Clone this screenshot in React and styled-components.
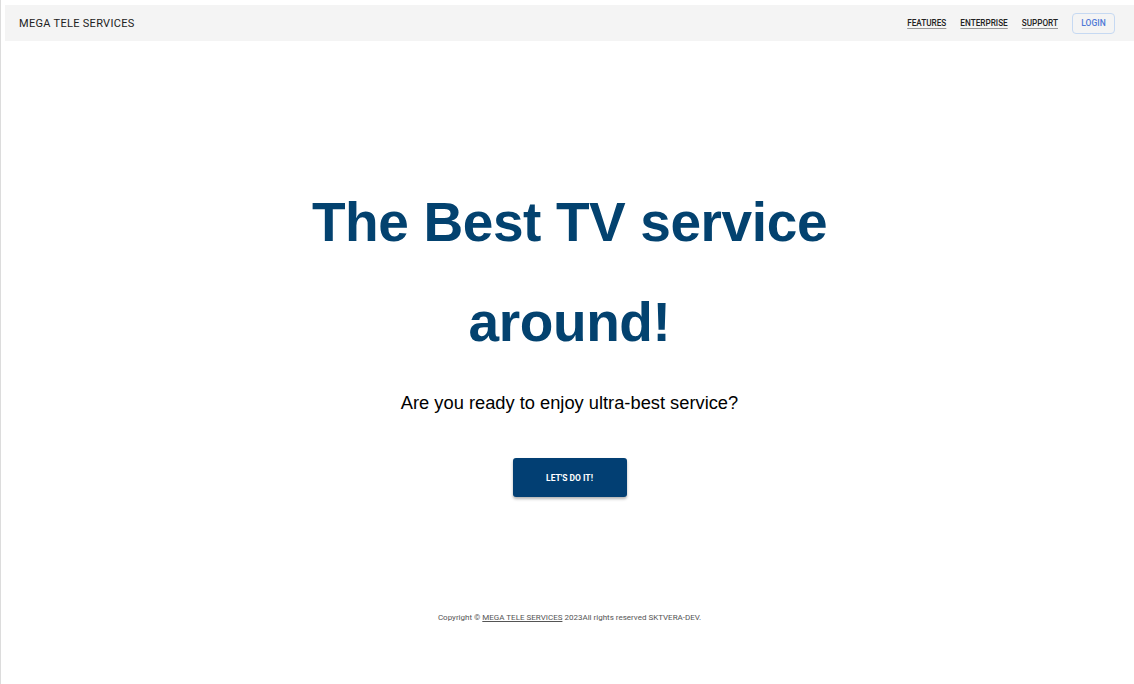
import styled, { createGlobalStyle } from 'styled-components';

const GlobalStyle = createGlobalStyle`
  html, body {
    margin: 0;
    padding: 0;
    background: #ffffff;
  }
  body {
    font-family: Roboto, "Liberation Sans", sans-serif;
  }
`;

const Page = styled.div`
  min-height: 684px;
  box-sizing: border-box;
  border-left: 1px solid #dcdcdc;
  padding: 5px 0 0 4px;
  display: flex;
  flex-direction: column;
`;

const Header = styled.header`
  height: 36px;
  background: #f4f4f4;
  display: flex;
  align-items: center;
  justify-content: space-between;
  padding: 0 19px 0 14px;
`;

const Brand = styled.div`
  font-family: Roboto, sans-serif;
  font-size: 11px;
  font-weight: 400;
  color: #222;
  letter-spacing: 0.3px;
`;

const Nav = styled.nav`
  display: flex;
  align-items: center;
  gap: 14px;
`;

const NavLink = styled.a`
  font-family: Roboto, sans-serif;
  font-size: 8.2px;
  font-weight: 500;
  color: #222;
  text-decoration: underline;
  text-decoration-color: #999;
  text-underline-offset: 2px;
`;

const LoginButton = styled.button`
  width: 43px;
  height: 21px;
  border: 1px solid #c6d9f2;
  border-radius: 4px;
  background: transparent;
  font-family: Roboto, sans-serif;
  font-size: 8.5px;
  font-weight: 500;
  color: #4f78d6;
  padding: 0;
`;

const Hero = styled.main`
  display: flex;
  flex-direction: column;
  align-items: center;
  padding-top: 131px;
`;

const Title = styled.h1`
  margin: 0;
  font-family: "Liberation Sans", Arial, sans-serif;
  font-weight: 700;
  font-size: 55px;
  letter-spacing: -0.4px;
  line-height: 100px;
  color: #03426f;
  text-align: center;
  width: 560px;
`;

const Subtitle = styled.p`
  margin: 19px 0 0;
  font-family: "Liberation Sans", Arial, sans-serif;
  font-size: 18.3px;
  line-height: 23px;
  color: #000;
`;

const CtaButton = styled.button`
  margin-top: 44px;
  width: 114px;
  height: 39px;
  border: none;
  border-radius: 3px;
  background: #023f73;
  color: #fff;
  font-family: Roboto, sans-serif;
  font-size: 8.5px;
  font-weight: 700;
  box-shadow: 0 2px 3px rgba(0, 0, 0, 0.3);
`;

const Footer = styled.footer`
  margin-top: 116px;
  text-align: center;
  font-family: Roboto, sans-serif;
  font-size: 8px;
  color: #555;
  a {
    color: #555;
    text-decoration: underline;
  }
`;

export default function App() {
  return (
    <>
      <GlobalStyle />
      <Page>
        <Header>
          <Brand>MEGA TELE SERVICES</Brand>
          <Nav>
            <NavLink>FEATURES</NavLink>
            <NavLink>ENTERPRISE</NavLink>
            <NavLink>SUPPORT</NavLink>
            <LoginButton>LOGIN</LoginButton>
          </Nav>
        </Header>
        <Hero>
          <Title>The Best TV service around!</Title>
          <Subtitle>Are you ready to enjoy ultra-best service?</Subtitle>
          <CtaButton>LET'S DO IT!</CtaButton>
        </Hero>
        <Footer>
          Copyright © <a>MEGA TELE SERVICES</a> 2023All rights reserved SKTVERA-DEV.
        </Footer>
      </Page>
    </>
  );
}
